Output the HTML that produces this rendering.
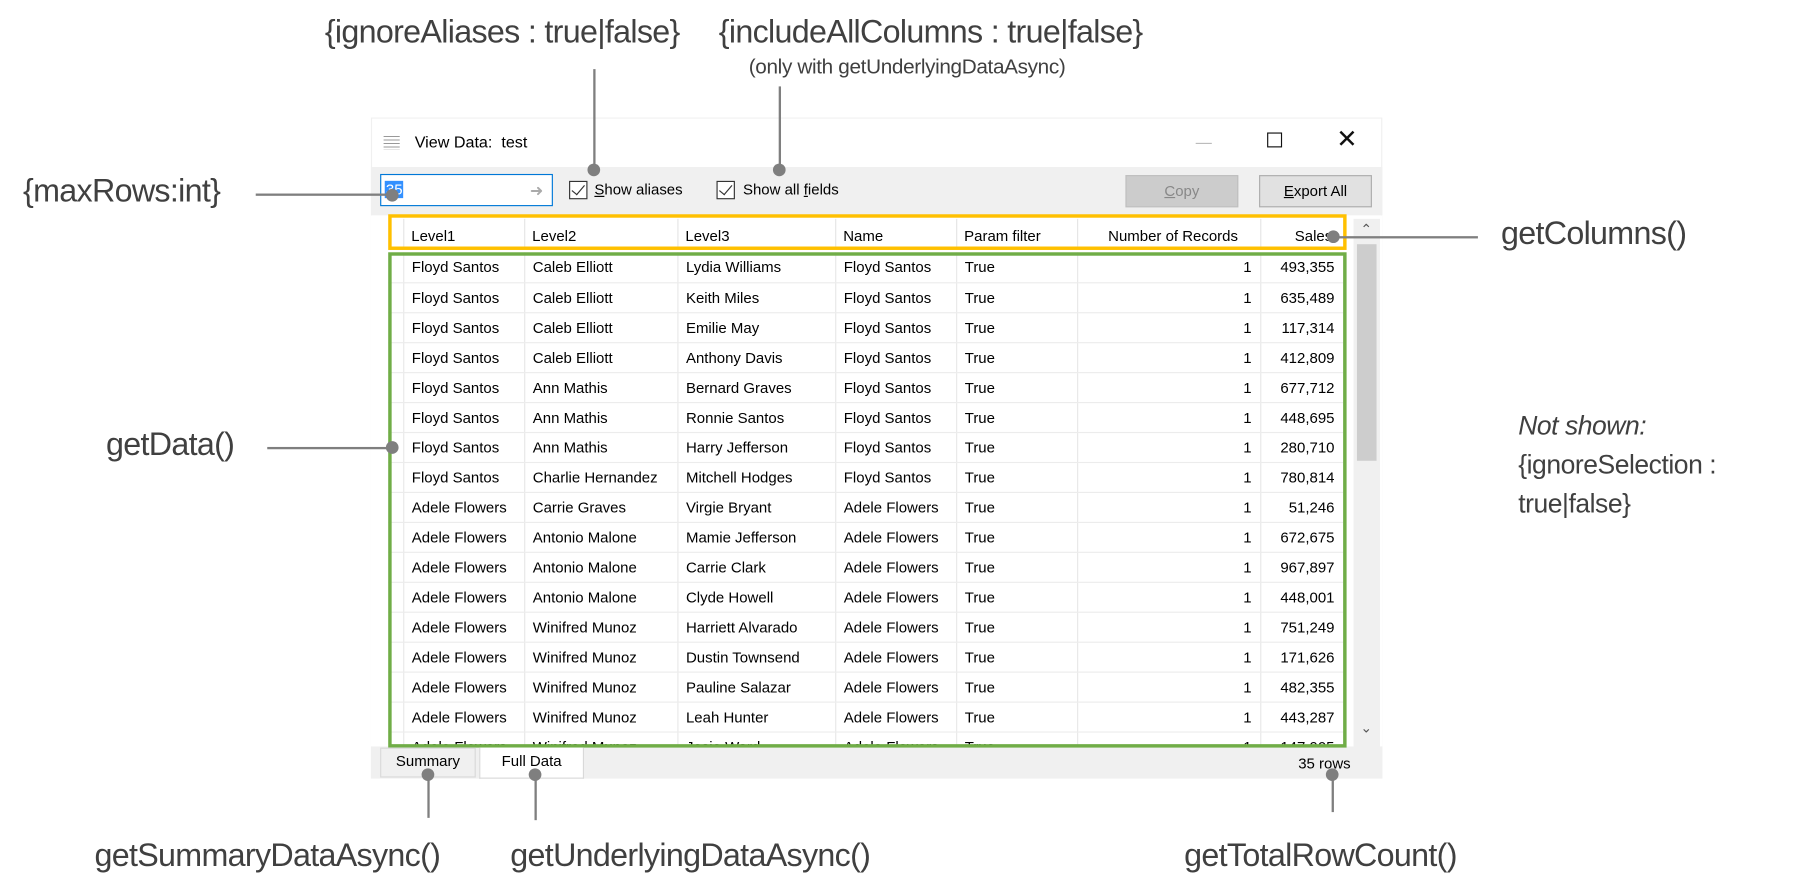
<!DOCTYPE html>
<html><head><meta charset="utf-8"><style>
*{margin:0;padding:0;box-sizing:border-box}
html,body{width:1797px;height:896px;overflow:hidden;background:#fff}
#c{position:absolute;left:0;top:0;width:1560px;height:778px;transform:scale(1.15192);transform-origin:0 0;font-family:"Liberation Sans",sans-serif}
.a{position:absolute;color:#404040;font-size:25px;white-space:nowrap;letter-spacing:-0.6px;z-index:5}
.ln{position:absolute;background:#7f7f7f;z-index:5}
.dot{position:absolute;width:11px;height:11px;border-radius:50%;background:#7f7f7f;z-index:5}
.ab{position:absolute}
.t{font-size:13px;color:#000;white-space:nowrap}
table{border-collapse:collapse;position:absolute;left:337px;top:219px;width:829px;table-layout:fixed;font-size:13px}
td{height:26px;border-right:1px solid #e8e8e8;border-bottom:1px solid #ececec;padding:0 7px;white-space:nowrap;overflow:hidden;color:#000;line-height:25px}
td.r{text-align:right}
.cb{position:absolute;width:16px;height:16px;border:1px solid #333;background:#fff}
.cb:after{content:"";position:absolute;left:4px;top:0px;width:5px;height:10px;border:solid #333;border-width:0 1.5px 1.5px 0;transform:rotate(40deg)}
</style></head><body><div id="c">
<!-- window -->
<div class="ab" style="left:322px;top:102px;width:878px;height:574px;background:#fff;border:1px solid #f0f0f0"></div>
<div class="ab" style="left:333px;top:118px;width:14px;height:12px;background:repeating-linear-gradient(#999 0 1px,#fff 1px 3px)"></div>
<div class="ab t" style="left:360px;top:115px;font-size:14px">View Data:&nbsp; test</div>
<div class="ab" style="left:1038px;top:124px;width:14px;height:1px;background:#bbb"></div>
<div class="ab" style="left:1100px;top:115px;width:13px;height:13px;border:1.5px solid #111"></div>
<div class="ab" style="left:1160px;top:108px;font-size:22px;color:#111">✕</div>
<div class="ab" style="left:322px;top:145px;width:878px;height:42px;background:#f0f0f0"></div>
<div class="ab" style="left:330px;top:151px;width:150px;height:28px;border:1px solid #0078d7;background:#fff"></div>
<div class="ab t" style="left:334px;top:157px;background:#3390ff;color:#fff;padding:0 1px">35</div>
<div class="ab" style="left:460px;top:157px;color:#aaa;font-size:14px">➜</div>
<div class="cb" style="left:494px;top:157px"></div>
<div class="ab t" style="left:516px;top:157px"><u>S</u>how aliases</div>
<div class="cb" style="left:622px;top:157px"></div>
<div class="ab t" style="left:645px;top:157px">Show all <u>f</u>ields</div>
<div class="ab t" style="left:977px;top:152px;width:98px;height:28px;background:#ccc;border:1px solid #bfbfbf;color:#888;text-align:center;line-height:26px"><u>C</u>opy</div>
<div class="ab t" style="left:1093px;top:152px;width:98px;height:28px;background:#e1e1e1;border:1px solid #adadad;text-align:center;line-height:26px"><u>E</u>xport All</div>
<!-- header -->
<div class="ab" style="left:322px;top:187px;width:878px;height:461px;background:#fff"></div>
<div class="ab t" style="left:357px;top:197px">Level1</div>
<div class="ab t" style="left:462px;top:197px">Level2</div>
<div class="ab t" style="left:595px;top:197px">Level3</div>
<div class="ab t" style="left:732px;top:197px">Name</div>
<div class="ab t" style="left:837px;top:197px">Param filter</div>
<div class="ab t" style="left:962px;top:197px">Number of Records</div>
<div class="ab t" style="left:1124px;top:197px">Sales</div>
<div class="ab" style="left:455px;top:190px;width:1px;height:25px;background:#e5e5e5"></div>
<div class="ab" style="left:588px;top:190px;width:1px;height:25px;background:#e5e5e5"></div>
<div class="ab" style="left:725px;top:190px;width:1px;height:25px;background:#e5e5e5"></div>
<div class="ab" style="left:830px;top:190px;width:1px;height:25px;background:#e5e5e5"></div>
<div class="ab" style="left:935px;top:190px;width:1px;height:25px;background:#e5e5e5"></div>
<div class="ab" style="left:1094px;top:190px;width:1px;height:25px;background:#e5e5e5"></div>
<div class="ab" style="left:350px;top:190px;width:1px;height:25px;background:#e5e5e5"></div>
<table>
<colgroup><col style="width:13px"><col style="width:105px"><col style="width:133px"><col style="width:137px"><col style="width:105px"><col style="width:105px"><col style="width:159px"><col style="width:72px"></colgroup>
<tr><td></td><td>Floyd Santos</td><td>Caleb Elliott</td><td>Lydia Williams</td><td>Floyd Santos</td><td>True</td><td class="r">1</td><td class="r">493,355</td></tr>
<tr><td></td><td>Floyd Santos</td><td>Caleb Elliott</td><td>Keith Miles</td><td>Floyd Santos</td><td>True</td><td class="r">1</td><td class="r">635,489</td></tr>
<tr><td></td><td>Floyd Santos</td><td>Caleb Elliott</td><td>Emilie May</td><td>Floyd Santos</td><td>True</td><td class="r">1</td><td class="r">117,314</td></tr>
<tr><td></td><td>Floyd Santos</td><td>Caleb Elliott</td><td>Anthony Davis</td><td>Floyd Santos</td><td>True</td><td class="r">1</td><td class="r">412,809</td></tr>
<tr><td></td><td>Floyd Santos</td><td>Ann Mathis</td><td>Bernard Graves</td><td>Floyd Santos</td><td>True</td><td class="r">1</td><td class="r">677,712</td></tr>
<tr><td></td><td>Floyd Santos</td><td>Ann Mathis</td><td>Ronnie Santos</td><td>Floyd Santos</td><td>True</td><td class="r">1</td><td class="r">448,695</td></tr>
<tr><td></td><td>Floyd Santos</td><td>Ann Mathis</td><td>Harry Jefferson</td><td>Floyd Santos</td><td>True</td><td class="r">1</td><td class="r">280,710</td></tr>
<tr><td></td><td>Floyd Santos</td><td>Charlie Hernandez</td><td>Mitchell Hodges</td><td>Floyd Santos</td><td>True</td><td class="r">1</td><td class="r">780,814</td></tr>
<tr><td></td><td>Adele Flowers</td><td>Carrie Graves</td><td>Virgie Bryant</td><td>Adele Flowers</td><td>True</td><td class="r">1</td><td class="r">51,246</td></tr>
<tr><td></td><td>Adele Flowers</td><td>Antonio Malone</td><td>Mamie Jefferson</td><td>Adele Flowers</td><td>True</td><td class="r">1</td><td class="r">672,675</td></tr>
<tr><td></td><td>Adele Flowers</td><td>Antonio Malone</td><td>Carrie Clark</td><td>Adele Flowers</td><td>True</td><td class="r">1</td><td class="r">967,897</td></tr>
<tr><td></td><td>Adele Flowers</td><td>Antonio Malone</td><td>Clyde Howell</td><td>Adele Flowers</td><td>True</td><td class="r">1</td><td class="r">448,001</td></tr>
<tr><td></td><td>Adele Flowers</td><td>Winifred Munoz</td><td>Harriett Alvarado</td><td>Adele Flowers</td><td>True</td><td class="r">1</td><td class="r">751,249</td></tr>
<tr><td></td><td>Adele Flowers</td><td>Winifred Munoz</td><td>Dustin Townsend</td><td>Adele Flowers</td><td>True</td><td class="r">1</td><td class="r">171,626</td></tr>
<tr><td></td><td>Adele Flowers</td><td>Winifred Munoz</td><td>Pauline Salazar</td><td>Adele Flowers</td><td>True</td><td class="r">1</td><td class="r">482,355</td></tr>
<tr><td></td><td>Adele Flowers</td><td>Winifred Munoz</td><td>Leah Hunter</td><td>Adele Flowers</td><td>True</td><td class="r">1</td><td class="r">443,287</td></tr>
<tr><td></td><td>Adele Flowers</td><td>Winifred Munoz</td><td>Josie Ward</td><td>Adele Flowers</td><td>True</td><td class="r">1</td><td class="r">147,905</td></tr>
</table>
<!-- cover below table -->
<div class="ab" style="left:322px;top:648px;width:878px;height:28px;background:#f0f0f0"></div>
<div class="ab" style="left:322px;top:676px;width:900px;height:30px;background:#fff"></div>
<!-- scrollbar -->
<div class="ab" style="left:1175px;top:190px;width:23px;height:458px;background:#f0f0f0"></div>
<div class="ab" style="left:1178px;top:212px;width:17px;height:188px;background:#cdcdcd"></div>
<div class="ab" style="left:1181px;top:192px;font-size:12px;color:#555">⌃</div>
<div class="ab" style="left:1181px;top:625px;font-size:12px;color:#555">⌄</div>
<!-- highlight boxes -->
<div class="ab" style="left:337px;top:186px;width:832px;height:31px;border:3px solid #ffc000"></div>
<div class="ab" style="left:337px;top:219px;width:832px;height:430px;border:3px solid #70ad47"></div>
<!-- tabs -->
<div class="ab t" style="left:330px;top:649px;width:83px;height:26px;border:1px solid #d9d9d9;background:#f0f0f0;text-align:center;line-height:22px">Summary</div>
<div class="ab t" style="left:416px;top:649px;width:91px;height:27px;border:1px solid #d9d9d9;border-top:none;background:#fff;text-align:center;line-height:24px">Full Data</div>
<div class="ab t" style="left:1127px;top:655px">35 rows</div>

<!-- annotations -->
<div class="a" style="left:282px;top:12px;font-size:28px">{ignoreAliases : true|false}</div>
<div class="a" style="left:624px;top:12px;font-size:28px">{includeAllColumns : true|false}</div>
<div class="a" style="left:650px;top:48px;font-size:18px;letter-spacing:-0.3px">(only with getUnderlyingDataAsync)</div>
<div class="a" style="left:20px;top:150px;font-size:28px">{maxRows:int}</div>
<div class="a" style="left:1303px;top:187px;font-size:28px">getColumns()</div>
<div class="a" style="left:92px;top:370px;font-size:28px">getData()</div>
<div class="a" style="left:1318px;top:356px;font-size:23px;font-style:italic;letter-spacing:-0.4px">Not shown:</div>
<div class="a" style="left:1318px;top:390px;font-size:23px;letter-spacing:-0.4px">{ignoreSelection :</div>
<div class="a" style="left:1318px;top:424px;font-size:23px;letter-spacing:-0.4px">true|false}</div>
<div class="a" style="left:82px;top:727px;font-size:28px">getSummaryDataAsync()</div>
<div class="a" style="left:443px;top:727px;font-size:28px">getUnderlyingDataAsync()</div>
<div class="a" style="left:1028px;top:727px;font-size:28px">getTotalRowCount()</div>
<!-- lines -->
<div class="ln" style="left:515px;top:60px;width:1.5px;height:87px"></div><div class="dot" style="left:510px;top:142px"></div>
<div class="ln" style="left:676px;top:75px;width:1.5px;height:72px"></div><div class="dot" style="left:671px;top:142px"></div>
<div class="ln" style="left:222px;top:168px;width:118px;height:1.5px"></div><div class="dot" style="left:335px;top:164px"></div>
<div class="ln" style="left:1160px;top:205px;width:123px;height:1.5px"></div><div class="dot" style="left:1152px;top:200px"></div>
<div class="ln" style="left:232px;top:388px;width:108px;height:1.5px"></div><div class="dot" style="left:335px;top:383px"></div>
<div class="ln" style="left:371px;top:673px;width:1.5px;height:37px"></div><div class="dot" style="left:366px;top:667px"></div>
<div class="ln" style="left:464px;top:673px;width:1.5px;height:39px"></div><div class="dot" style="left:459px;top:667px"></div>
<div class="ln" style="left:1156px;top:673px;width:1.5px;height:32px"></div><div class="dot" style="left:1151px;top:667px"></div>
</div></body></html>
